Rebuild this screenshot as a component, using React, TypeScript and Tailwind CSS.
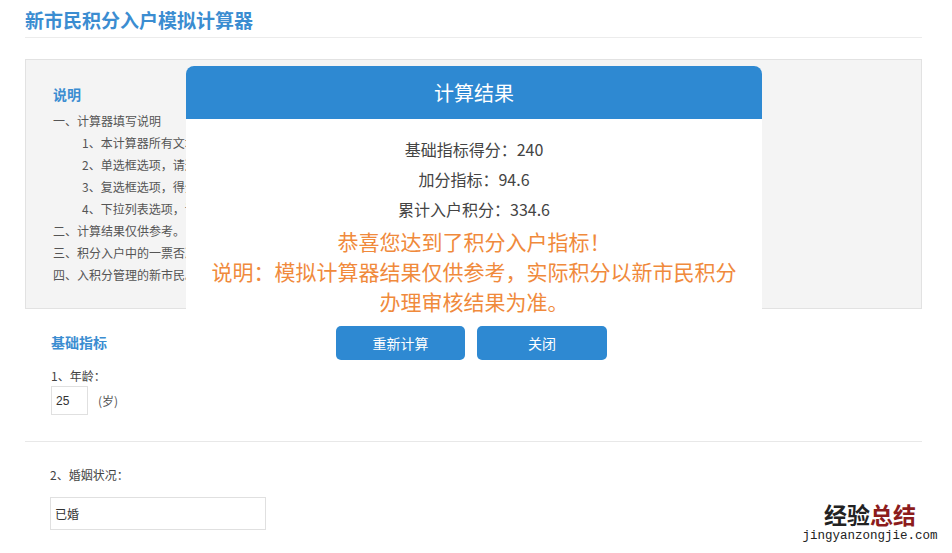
import type { ReactNode } from "react";

const cjk = "font-['Microsoft_YaHei','Noto_Sans_CJK_SC',sans-serif]";

const notes: Array<{ text: string; sub?: boolean }> = [
  { text: "一、计算器填写说明" },
  { text: "1、本计算器所有文本框均需填写数字。", sub: true },
  { text: "2、单选框选项，请选择一项。", sub: true },
  { text: "3、复选框选项，得分累加。", sub: true },
  { text: "4、下拉列表选项，请选择。", sub: true },
  { text: "二、计算结果仅供参考。" },
  { text: "三、积分入户中的一票否决。" },
  { text: "四、入积分管理的新市民。" },
];

function Field({ label, children }: { label: string; children: ReactNode }) {
  return (
    <div>
      <p className="text-[12px] leading-[20px] text-[#444]">{label}</p>
      {children}
    </div>
  );
}

function ResultModal() {
  return (
    <div className="absolute left-[186px] top-[66px] w-[576px] rounded-t-[8px] bg-white pb-[14px]">
      <div className="flex h-[53px] items-center justify-center rounded-t-[8px] bg-[#2e89d2]">
        <h2 className="text-[20px] text-white">计算结果</h2>
      </div>
      <div className="px-[18px] pt-[15px] text-center">
        <div className="text-[16px] leading-[30px] text-[#444]">
          <p>基础指标得分：240</p>
          <p>加分指标：94.6</p>
          <p>累计入户积分：334.6</p>
        </div>
        <div className="mt-[2px] text-[21px] leading-[30px] text-[#f08a3c]">
          <p>恭喜您达到了积分入户指标！</p>
          <p>说明：模拟计算器结果仅供参考，实际积分以新市民积分办理审核结果为准。</p>
        </div>
        <div className="mt-[10px] flex justify-center gap-[12px] pr-[5px]">
          <button className="h-[34px] w-[129px] rounded-[5px] bg-[#2e89d2] text-[14px] text-white">
            重新计算
          </button>
          <button className="h-[34px] w-[130px] rounded-[5px] bg-[#2e89d2] text-[14px] text-white">
            关闭
          </button>
        </div>
      </div>
    </div>
  );
}

export default function App() {
  return (
    <div className={`relative h-[553px] w-[952px] overflow-hidden bg-white ${cjk}`}>
      <div className="ml-[25px] w-[897px]">
        <header className="border-b border-[#ececec] pt-[8px] pb-[5px]">
          <h1 className="text-[19px] font-bold leading-[24px] text-[#3b8dd1]">
            新市民积分入户模拟计算器
          </h1>
        </header>

        <section className="mt-[21px] h-[250px] border border-[#e2e2e2] bg-[#f4f4f4] pl-[27px] pt-[23px]">
          <h3 className="text-[14px] font-bold leading-[22px] text-[#3b8dd1]">说明</h3>
          <ul className="mt-[5px] text-[12px] leading-[22px] text-[#555]">
            {notes.map((n) => (
              <li key={n.text} className={n.sub ? "pl-[29px]" : ""}>
                {n.text}
              </li>
            ))}
          </ul>
        </section>

        <section className="border-b border-[#e8e8e8] pl-[26px] pt-[22px] pb-[26px]">
          <h3 className="text-[14px] font-bold leading-[22px] text-[#3b8dd1]">基础指标</h3>
          <div className="mt-[13px]">
            <Field label="1、年龄：">
              <div className="flex items-center">
                <div className="flex h-[29px] w-[37px] items-center border border-[#e0e0e0] pl-[4px] font-['Liberation_Sans',sans-serif] text-[12px] text-[#333]">
                  25
                </div>
                <span className="ml-[10px] text-[12px] text-[#555]">(岁)</span>
              </div>
            </Field>
          </div>
        </section>

        <section className="pl-[25px] pt-[23px]">
          <Field label="2、婚姻状况：">
            <div className="mt-[12px] flex h-[33px] w-[216px] items-center border border-[#e0e0e0] pl-[4px] text-[12px] text-[#333]">
              已婚
            </div>
          </Field>
        </section>
      </div>

      <ResultModal />

      <div className="absolute left-[800px] top-[502px] flex w-[140px] flex-col items-center">
        <p className="text-[23px] font-bold leading-[25px]">
          <span className="text-[#222]">经验</span>
          <span className="text-[#8c1c1c]">总结</span>
        </p>
        <p className="mt-[2px] font-['Liberation_Mono',monospace] text-[12.5px] leading-[14px] text-[#222]">
          jingyanzongjie.com
        </p>
      </div>
    </div>
  );
}
